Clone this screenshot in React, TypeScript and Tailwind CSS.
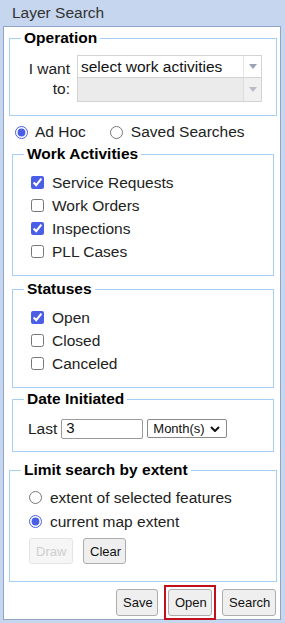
import React from 'react';

// Layer Search panel — fieldset based form
const Tri = ({ color = '#9aa3b3' }: { color?: string }) => (
  <svg width="8" height="5" viewBox="0 0 8 5">
    <path d="M0 0 L8 0 L4 5 Z" fill={color} />
  </svg>
);

const Check = ({ label, checked }: { label: string; checked?: boolean }) => (
  <label className="flex items-center h-[23px]">
    <input type="checkbox" defaultChecked={checked} className="m-0 w-[13px] h-[13px] accent-[#4b5fe6]" />
    <span className="ml-[8px]">{label}</span>
  </label>
);

const Radio = ({ label, checked, name }: { label: string; checked?: boolean; name: string }) => (
  <label className="flex items-center h-[24px]">
    <input type="radio" name={name} defaultChecked={checked} className="m-0 w-[13px] h-[13px] accent-[#4b5fe6]" />
    <span className="ml-[8px]">{label}</span>
  </label>
);

const Btn = ({ children, disabled, className = '' }: { children: React.ReactNode; disabled?: boolean; className?: string }) => (
  <button
    disabled={disabled}
    className={`h-[26px] rounded-[3px] border text-[13px] px-[6px] ${
      disabled ? 'border-[#e4e4e4] bg-[#f6f6f6] text-[#cfcfcf]' : 'border-[#adadad] bg-[#efefef] text-[#111]'
    } ${className}`}
  >
    {children}
  </button>
);

const Legend = ({ children }: { children: React.ReactNode }) => (
  <legend className="ml-[11px] px-[3px] font-bold text-black leading-[18px]">{children}</legend>
);

export default function App() {
  return (
    <div className="w-[285px] h-[623px] bg-[#c5d6ee] pl-[3px] pr-[4px] pb-[3px] flex flex-col font-['Liberation_Sans',Arial,sans-serif] text-[15.5px] text-[#222]">
      <div className="h-[26px] leading-[26px] pl-[9px] text-[#333]">Layer Search</div>

      <div className="flex-1 bg-white border border-[#8fa4c6] flex flex-col">
        {/* Operation */}
        <fieldset className="mt-[2px] ml-[5px] w-[268px] border border-[#a6cff5]">
          <Legend>Operation</Legend>
          <div className="flex pt-[8px] pl-[10px] pb-[13px]">
            <div className="w-[50px] text-right leading-[20px] mt-[4px]">I want to:</div>
            <div className="ml-[7px] w-[185px] flex flex-col">
              <div className="h-[23px] flex border border-[#d3d3d3] bg-white">
                <span className="flex-1 pl-[3px] leading-[21px] text-[#111]">select work activities</span>
                <span className="w-[18px] border-l border-[#e6e6e6] flex items-center justify-center">
                  <Tri />
                </span>
              </div>
              <div className="h-[24px] flex border border-t-0 border-[#d3d3d3] bg-[#ebebeb]">
                <span className="flex-1" />
                <span className="w-[18px] border-l border-[#dcdcdc] bg-[#f0f0f0] flex items-center justify-center">
                  <Tri color="#b8bcc4" />
                </span>
              </div>
            </div>
          </div>
        </fieldset>

        {/* Mode */}
        <div className="mt-[6px] h-[20px] pl-[11px] flex items-center">
          <label className="flex items-center">
            <input type="radio" name="mode" defaultChecked className="m-0 w-[13px] h-[13px] accent-[#4b5fe6]" />
            <span className="ml-[7px]">Ad Hoc</span>
          </label>
          <label className="flex items-center ml-[24px]">
            <input type="radio" name="mode" className="m-0 w-[13px] h-[13px] accent-[#4b5fe6]" />
            <span className="ml-[8px]">Saved Searches</span>
          </label>
        </div>

        {/* Work Activities */}
        <fieldset className="mt-[3px] ml-[8px] w-[262px] border border-[#a6cff5]">
          <Legend>Work Activities</Legend>
          <div className="pt-[8px] pl-[18px] pb-[12px]">
            <Check label="Service Requests" checked />
            <Check label="Work Orders" />
            <Check label="Inspections" checked />
            <Check label="PLL Cases" />
          </div>
        </fieldset>

        {/* Statuses */}
        <fieldset className="mt-[4px] ml-[8px] w-[262px] border border-[#a6cff5]">
          <Legend>Statuses</Legend>
          <div className="pt-[8px] pl-[18px] pb-[12px]">
            <Check label="Open" checked />
            <Check label="Closed" />
            <Check label="Canceled" />
          </div>
        </fieldset>

        {/* Date Initiated */}
        <fieldset className="mt-[2px] ml-[8px] w-[262px] border border-[#a6cff5]">
          <Legend>Date Initiated</Legend>
          <div className="pt-[9px] pl-[15px] pb-[11px] flex items-center">
            <span>Last</span>
            <input
              defaultValue="3"
              className="ml-[4px] w-[82px] h-[20px] border border-[#9a9a9a] rounded-[2px] px-[4px] text-[15px] text-[#111]"
            />
            <div className="ml-[4px] w-[80px] h-[19px] border border-[#8a8a8a] rounded-[2px] flex items-center pl-[5px] pr-[6px] text-[13px] text-[#111]">
              <span className="flex-1">Month(s)</span>
              <svg width="10" height="6" viewBox="0 0 10 6">
                <path d="M1 1 L5 5 L9 1" fill="none" stroke="#111" strokeWidth="2" />
              </svg>
            </div>
          </div>
        </fieldset>

        {/* Limit search by extent */}
        <fieldset className="mt-[9px] ml-[5px] w-[268px] border border-[#a6cff5]">
          <Legend>Limit search by extent</Legend>
          <div className="pt-[6px] pl-[19px] pb-[17px]">
            <Radio name="extent" label="extent of selected features" />
            <Radio name="extent" label="current map extent" checked />
            <div className="mt-[5px] flex gap-[10px]">
              <Btn disabled className="w-[44px]">Draw</Btn>
              <Btn className="w-[43px]">Clear</Btn>
            </div>
          </div>
        </fieldset>

        {/* Actions */}
        <div className="mt-[7px] pr-[4px] flex justify-end items-center">
          <Btn className="w-[42px] h-[27px]">Save</Btn>
          <div className="ml-[6px] mr-[6px] -my-[4px] border-2 border-[#c0101c] p-[2px]">
            <Btn className="w-[44px] h-[27px] block">Open</Btn>
          </div>
          <Btn className="w-[54px] h-[27px]">Search</Btn>
        </div>
      </div>
    </div>
  );
}
